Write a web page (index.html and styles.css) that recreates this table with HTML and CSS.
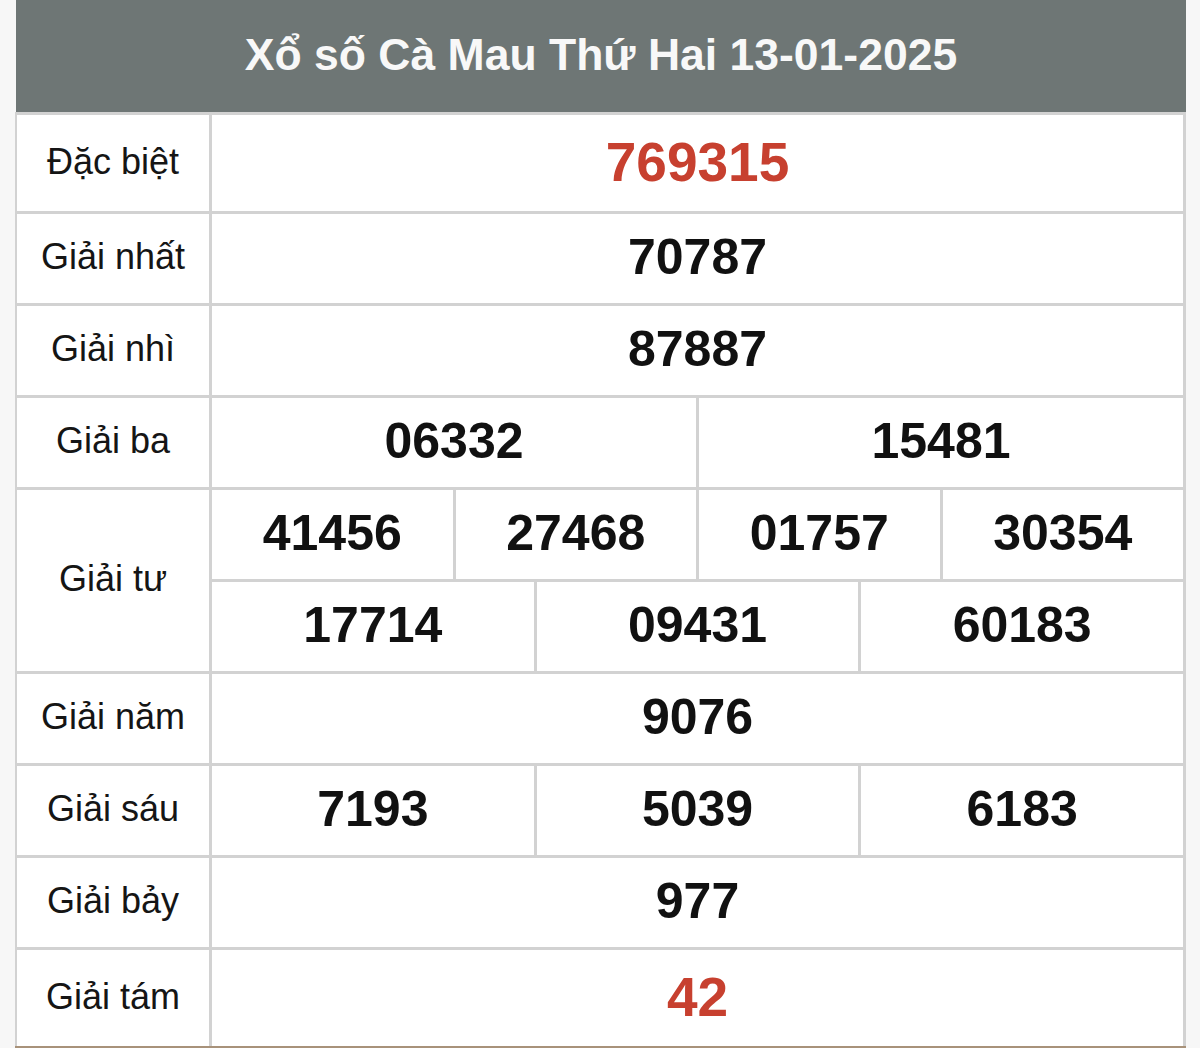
FILE: index.html
```html
<!DOCTYPE html>
<html lang="vi">
<head>
<meta charset="utf-8">
<title>Xổ số Cà Mau Thứ Hai 13-01-2025</title>
<link rel="stylesheet" href="styles.css">
</head>
<body>
<div class="board">
  <div class="title">Xổ số Cà Mau Thứ Hai 13-01-2025</div>
  <div class="table">
    <div class="row row-tall">
      <div class="label">Đặc biệt</div>
      <div class="vals"><div class="cell big red">769315</div></div>
    </div>
    <div class="row">
      <div class="label">Giải nhất</div>
      <div class="vals"><div class="cell">70787</div></div>
    </div>
    <div class="row">
      <div class="label">Giải nhì</div>
      <div class="vals"><div class="cell">87887</div></div>
    </div>
    <div class="row">
      <div class="label">Giải ba</div>
      <div class="vals cols-2"><div class="cell">06332</div><div class="cell">15481</div></div>
    </div>
    <div class="row row-double">
      <div class="label">Giải tư</div>
      <div class="stack">
        <div class="vals cols-4"><div class="cell">41456</div><div class="cell">27468</div><div class="cell">01757</div><div class="cell">30354</div></div>
        <div class="vals cols-3"><div class="cell">17714</div><div class="cell">09431</div><div class="cell">60183</div></div>
      </div>
    </div>
    <div class="row">
      <div class="label">Giải năm</div>
      <div class="vals"><div class="cell">9076</div></div>
    </div>
    <div class="row">
      <div class="label">Giải sáu</div>
      <div class="vals cols-3"><div class="cell">7193</div><div class="cell">5039</div><div class="cell">6183</div></div>
    </div>
    <div class="row">
      <div class="label">Giải bảy</div>
      <div class="vals"><div class="cell">977</div></div>
    </div>
    <div class="row row-tall">
      <div class="label">Giải tám</div>
      <div class="vals"><div class="cell big red">42</div></div>
    </div>
  </div>
</div>
</body>
</html>
```

FILE: styles.css
```css
html, body {
  margin: 0;
  padding: 0;
  background: #f7f7f7;
}
body {
  font-family: "Liberation Sans", Arial, sans-serif;
  color: #111111;
}
.board {
  margin-left: 15px;
  width: 1171px;
}
.title {
  height: 112px;
  background: #6e7675;
  color: #f8f8f8;
  font-weight: bold;
  font-size: 44.5px;
  display: flex;
  align-items: center;
  justify-content: center;
  margin-left: 1px;
  padding-bottom: 2px;
  box-sizing: border-box;
}
.table {
  background: #d2d2d2;
  padding: 3px 3px 0 2px;
  display: flex;
  flex-direction: column;
  gap: 3px;
  border-bottom: 2px solid #a8927a;
}
.row {
  display: grid;
  grid-template-columns: 192px 1fr;
  gap: 3px;
  height: 89px;
}
.row-tall {
  height: 96px;
}
.row-double {
  height: 181px;
}
.label {
  background: #ffffff;
  display: flex;
  align-items: center;
  justify-content: center;
  font-size: 36px;
  color: #151515;
  padding-bottom: 3px;
  box-sizing: border-box;
}
.stack {
  display: flex;
  flex-direction: column;
  gap: 3px;
}
.vals {
  display: grid;
  grid-template-columns: 1fr;
  gap: 3px;
  flex: 1;
}
.cols-2 { grid-template-columns: repeat(2, 1fr); }
.cols-3 { grid-template-columns: repeat(3, 1fr); }
.cols-4 { grid-template-columns: repeat(4, 1fr); }
.cell {
  background: #ffffff;
  display: flex;
  align-items: center;
  justify-content: center;
  font-weight: bold;
  font-size: 50px;
  color: #111111;
  padding-bottom: 3px;
  box-sizing: border-box;
}
.big {
  font-size: 55px;
}
.red {
  color: #c7402f;
}
```
